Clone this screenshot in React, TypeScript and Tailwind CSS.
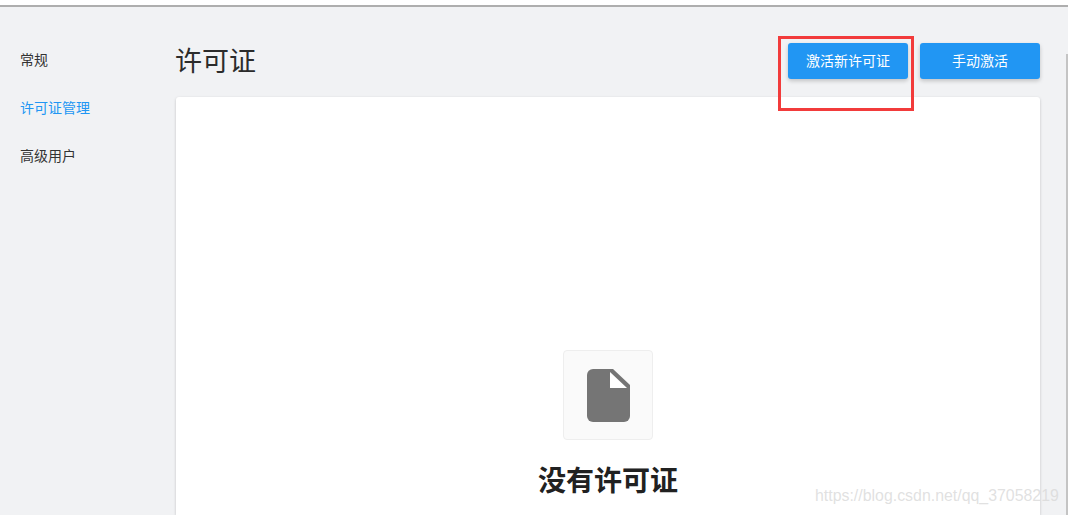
const cjk = "font-['Roboto','Noto_Sans_CJK_SC',sans-serif]"

function FileIcon() {
  return (
    <svg width="43" height="53" viewBox="0 0 43 53">
      <path d="M6 0H26L43 16V47a6 6 0 0 1-6 6H6a6 6 0 0 1-6-6V6a6 6 0 0 1 6-6Z" fill="#757575" />
      <path d="M23 3L40 19H23Z" fill="#fff" />
    </svg>
  )
}

export default function App() {
  return (
    <div className={`relative flex h-[515px] w-[1068px] flex-col overflow-hidden bg-[#f1f2f4] ${cjk}`}>
      <div className="h-[7px] shrink-0 border-b-2 border-[#aeaeae] bg-white" />
      <div className="flex min-h-0 flex-1">
        <nav className="flex w-[176px] shrink-0 flex-col pt-[29px] pl-5 text-sm text-[#333]">
          <a className="flex h-12 items-center">常规</a>
          <a className="flex h-12 items-center text-[#2196f3]">许可证管理</a>
          <a className="flex h-12 items-center">高级用户</a>
        </nav>
        <main className="flex w-[864px] shrink-0 flex-col pt-9">
          <div className="flex h-[54px] shrink-0 items-start justify-between">
            <h1 className="-ml-px pt-px text-[27px] leading-9 font-normal text-[#2b2b2b]">许可证</h1>
            <div className="flex gap-3">
              <button className="h-9 w-[120px] rounded-[3px] bg-[#2196f3] text-sm text-white shadow-[0_2px_4px_rgba(0,0,0,0.2)]">激活新许可证</button>
              <button className="h-9 w-[120px] rounded-[3px] bg-[#2196f3] text-sm text-white shadow-[0_2px_4px_rgba(0,0,0,0.2)]">手动激活</button>
            </div>
          </div>
          <section className="flex flex-1 flex-col items-center rounded-t-[3px] bg-white pt-[253px] shadow-[0_1px_3px_rgba(0,0,0,0.2)]">
            <div className="flex h-[90px] w-[90px] items-center justify-center rounded-[4px] border border-[#eeeeee] bg-[#fafafa]">
              <FileIcon />
            </div>
            <h2 className="mt-[22px] text-[28px] leading-10 font-bold text-[#212121]">没有许可证</h2>
          </section>
        </main>
        <div className="ml-auto mt-[47px] w-[2px] bg-[#c4c4c4]" />
      </div>
      <div className="pointer-events-none absolute top-9 left-[778px] h-[75px] w-[136px] border-[3px] border-[#f23b3b]" />
      <span className="pointer-events-none absolute top-[487px] left-[815px] font-['Liberation_Sans',sans-serif] text-[15.9px] leading-[18px] text-[#d9d9d9]/80">https://blog.csdn.net/qq_37058219</span>
    </div>
  )
}
